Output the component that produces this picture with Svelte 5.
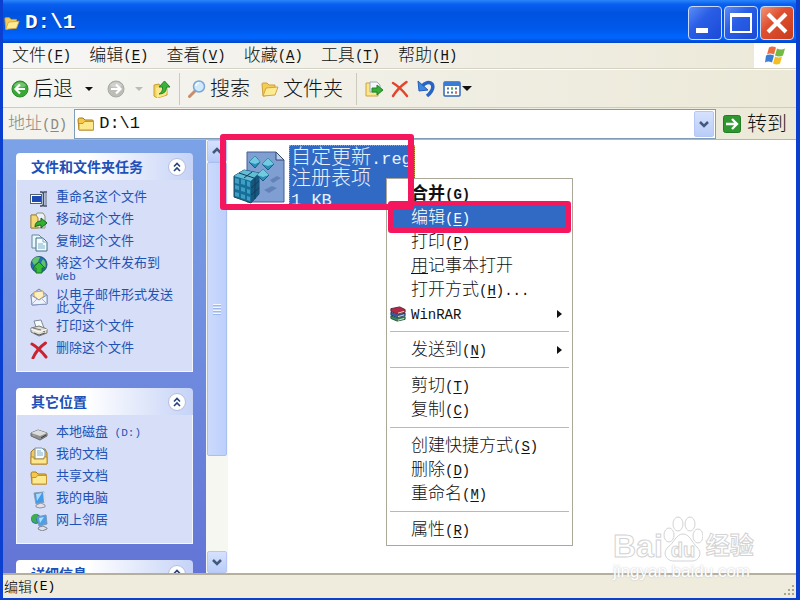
<script lang="ts">
  type Entry = { icon: string; text: string; latin?: string };
  type Command = { text: string; key?: string; tail?: string; icon?: string; submenu?: boolean; bold?: boolean; latin?: boolean; underlineFirst?: boolean };

  const menus = [
    { text: '文件', key: 'F' },
    { text: '编辑', key: 'E' },
    { text: '查看', key: 'V' },
    { text: '收藏', key: 'A' },
    { text: '工具', key: 'T' },
    { text: '帮助', key: 'H' },
  ];

  const panels: { title: string; items: Entry[] }[] = [
    {
      title: '文件和文件夹任务',
      items: [
        { icon: 'rename', text: '重命名这个文件' },
        { icon: 'move', text: '移动这个文件' },
        { icon: 'copy', text: '复制这个文件' },
        { icon: 'globe', text: '将这个文件发布到', latin: 'Web' },
        { icon: 'mail', text: '以电子邮件形式发送此文件' },
        { icon: 'print', text: '打印这个文件' },
        { icon: 'delete', text: '删除这个文件' },
      ],
    },
    {
      title: '其它位置',
      items: [
        { icon: 'disk', text: '本地磁盘', latin: ' (D:)' },
        { icon: 'docs', text: '我的文档' },
        { icon: 'folder', text: '共享文档' },
        { icon: 'computer', text: '我的电脑' },
        { icon: 'network', text: '网上邻居' },
      ],
    },
    { title: '详细信息', items: [] },
  ];

  const groups: Command[][] = [
    [
      { text: '合并', key: 'G', bold: true },
      { text: '编辑', key: 'E' },
      { text: '打印', key: 'P' },
      { text: '用记事本打开', underlineFirst: true },
      { text: '打开方式', key: 'H', tail: '...' },
      { text: 'WinRAR', icon: 'winrar', submenu: true, latin: true },
    ],
    [{ text: '发送到', key: 'N', submenu: true }],
    [
      { text: '剪切', key: 'T' },
      { text: '复制', key: 'C' },
    ],
    [
      { text: '创建快捷方式', key: 'S' },
      { text: '删除', key: 'D' },
      { text: '重命名', key: 'M' },
    ],
    [{ text: '属性', key: 'R' }],
  ];

  let active = $state('编辑');
  let address = $state('D:\\1');
  let closed: Record<string, boolean> = $state({});
</script>

{#snippet accel(key: string, tail = '')}<span class="latin">(<u>{key}</u>){tail}</span>{/snippet}

{#snippet icon(name: string)}
  <svg class="icon" viewBox="0 0 18 18" aria-hidden="true">
    {#if name === 'back' || name === 'forward'}
      <circle cx="9" cy="9" r="8" fill={name === 'back' ? '#39a936' : '#bdbdb8'} stroke={name === 'back' ? '#2c8a2b' : '#aaaaa5'} />
      <path d="M3 6a6.500 6 0 0 1 12 0q-6 3-12 0z" fill="#fff" opacity=".3" />
      <path d={name === 'back' ? 'M14 9H5M9 4.500 4.500 9 9 13.500' : 'M4 9h9M9 4.500 13.500 9 9 13.500'} fill="none" stroke="#fff" stroke-width="2.200" />
    {:else if name === 'up'}
      <path d="M1 5l5-1 1 2 7-1v10l-10 3-3-2z" fill="#f2d35e" stroke="#c89c30" />
      <path d="M3 8l10-3 2 1-2 9-9 3z" fill="#fbe88d" />
      <path d="M6 14q4-2 3.500-7H6l5.500-6L17 7h-3.500q0 7-7.500 7z" fill="#3bb23a" stroke="#23852a" />
    {:else if name === 'search'}
      <path d="M1.500 16.500 7 11" stroke="#c98d68" stroke-width="3" stroke-linecap="round" />
      <circle cx="11" cy="6.500" r="5.500" fill="#cfeafb" stroke="#7da5d5" stroke-width="1.500" />
      <path d="M8 6q0-3 3-3" fill="none" stroke="#fff" stroke-width="1.500" />
    {:else if name === 'folder-open'}
      <path d="M1 4q0-1 1-1h4l2 2h6v4L4 16H2z" fill="#f3cd55" stroke="#cf9f35" />
      <path d="M2 16 5 8l12-1-3 8z" fill="#fdeb94" stroke="#d3a63c" />
    {:else if name === 'folder'}
      <path d="M1 5q0-2 1.500-2H6l2 2h7q1.500 0 1.500 1.500V15H2z" fill="#f3c84b" stroke="#a8781d" />
      <path d="M2 15V8.500h4l1.500-2h9V15z" fill="#fde98d" stroke="#c59631" />
    {:else if name === 'moveto'}
      <path d="M1 3h5l1 2h6v11H1z" fill="#fbe68a" stroke="#cda343" />
      <path d="M5 2h7l3 3v7H5z" fill="#f5f8fb" stroke="#9fa9b4" />
      <path d="M7 8h5V5l6 5-6 5v-3H7z" fill="#35ad36" stroke="#1f8527" />
    {:else if name === 'cross'}
      <path d="M2 3q7 4 14 13M15.500 2Q7 8 2 16" fill="none" stroke="#e2442c" stroke-width="2.500" stroke-linecap="round" />
    {:else if name === 'undo'}
      <path d="M4 7q7-7 11-3 3 5-5 12" fill="none" stroke="#2864c4" stroke-width="3.500" />
      <path d="M1 1l1 10 9-1z" fill="#3d86df" stroke="#225fb8" />
    {:else if name === 'views'}
      <rect x="1" y="2" width="16" height="14" rx="1" fill="#fff" stroke="#3267b8" stroke-width="1.500" />
      <path d="M1 2h16v4H1z" fill="#3a7bd5" />
      <path d="M4 8.500h2m2 0h2m2 0h2M4 12.500h2m2 0h2m2 0h2" stroke="#4c78a8" stroke-width="2" />
      <path d="M8 8.500h2" stroke="#5bae55" stroke-width="2" /><path d="M12 12.500h2" stroke="#d47161" stroke-width="2" />
    {:else if name === 'rename'}
      <rect x=".5" y="4.500" width="11" height="9" fill="#fff" stroke="#55606f" />
      <rect x="2" y="6" width="9" height="6" fill="#1d49b4" />
      <path d="M10 2h2l1 1 1-1h3M13.500 3v12M10 16h2l1-1 1 1h3" fill="none" stroke="#414d63" stroke-width="1.500" />
      <path d="M16 3v12" stroke="#9aa5b5" stroke-width="2" />
    {:else if name === 'move'}
      <path d="M1 3h5l1-2h6l2 3v12H1z" fill="#edf0f4" stroke="#8d927a" />
      <path d="M1 3h5l2 3v10H1z" fill="#f5d875" stroke="#ac852f" />
      <path d="M5 15q0-6 6-6V6l6 5-6 5v-3q-4 0-6 2z" fill="#31b22f" stroke="#15641c" />
    {:else if name === 'copy'}
      <path d="M2 1h7l3 3v10H2z" fill="#e9f6fc" stroke="#64879b" />
      <path d="M6 4h7l4 4v9H6z" fill="#f3fcff" stroke="#426e84" />
      <path d="M13 4v4h4M8 10h5m-5 2h7m-7 2h7" fill="none" stroke="#7eafc9" />
    {:else if name === 'globe'}
      <circle cx="9" cy="8.500" r="8" fill="#256eb2" stroke="#245370" />
      <path d="M2 5q3-5 8-4l-2 5-4 3zm11-2q4 4 2 9l-4-5zM3 11l4 1 1 5z" fill="#61c46a" />
      <path d="M9 6l6 6h-3v5H6v-5H3z" fill="#38bd37" stroke="#167328" />
    {:else if name === 'mail'}
      <path d="M1 7l8-6 8 6v9l-15 1z" fill="#bfd1ef" stroke="#7184ab" />
      <path d="M4 8V4l9-1 1 5-5 4z" fill="#fff0bd" stroke="#cda653" />
      <path d="M1 7l8 5 8-5v9L2 17z" fill="#edf3ff" stroke="#8594bd" />
      <path d="M2 16l6-6m9 6-6-6" stroke="#a5b6d7" />
    {:else if name === 'print'}
      <path d="M4 2l7-1 3 8-7 2z" fill="#f8fafc" stroke="#7c8b9b" />
      <path d="M1 9l8-2 8 3v4l-8 3-8-4z" fill="#dedcd4" stroke="#777973" />
      <path d="M1 10l8 3 8-3" fill="none" stroke="#fff" /><path d="M4 14l5 2 6-2" stroke="#555" fill="none" />
      <path d="M3 9l8 2" stroke="#777" /><rect x="13" y="12" width="2" height="1" fill="#4ca651" />
    {:else if name === 'delete'}
      <path d="M2 3q7 4 14 13M15.500 2Q7 8 3 17" fill="none" stroke="#c92332" stroke-width="3" stroke-linecap="round" />
    {:else if name === 'disk'}
      <path d="M1 8l7-3 9 3v3l-7 4-9-4z" fill="#8e908f" stroke="#6b6d6d" />
      <path d="M1 8l7-3 9 3-7 3z" fill="#dcdddd" /><path d="M11 13l5-3" stroke="#353838" /><rect x="3" y="10" width="2" height="1" fill="#75c876" />
    {:else if name === 'docs'}
      <path d="M1 5l3-3h11l2 4v11H1z" fill="#f3ca58" stroke="#a47424" />
      <path d="M5 1h7l3 3v8H5z" fill="#f6fcff" stroke="#6f94ac" /><path d="M7 4h4M7 6h6M7 8h6" stroke="#7aaccc" />
      <path d="M1 10h3v2h10v-2h3v7H1z" fill="#fee78b" stroke="#bb8b2e" />
    {:else if name === 'computer'}
      <path d="M4 2l10-1 1 10-9 2z" fill="#459be8" stroke="#839bb7" />
      <path d="M6 3l6-1-5 8z" fill="#a9dcff" /><path d="M13 1l3 1v9l-2 1z" fill="#d7dde7" />
      <path d="M6 14l5-2 4 2v2l-5 1-4-1z" fill="#e1e2e7" stroke="#9294a5" />
    {:else if name === 'network'}
      <circle cx="6" cy="6" r="5" fill="#2a75bd" /><path d="M2 3q4-4 6-1L6 6l1 4q-5 0-6-5z" fill="#3fae4c" />
      <path d="M7 4l9-2 1 9-8 2z" fill="#4c9fe9" stroke="#7997b9" /><path d="M9 5l5-1-4 6z" fill="#b1e2ff" />
      <path d="M9 14l4-1 4 2v1l-5 2-4-2z" fill="#dedfe5" stroke="#7f8297" />
    {:else if name === 'winrar'}
      <path d="M1 3l10-2 6 3v3L8 9 1 6z" fill="#b32846" stroke="#54202c" />
      <path d="M1 7l7 3 9-2v3l-9 2-7-3z" fill="#3c62b3" stroke="#222e60" />
      <path d="M1 11l7 3 9-2v3l-9 2-7-3z" fill="#359160" stroke="#1c4b34" />
      <path d="M9 8l7-2M9 12l7-2M9 16l7-2" stroke="#f1e9be" />
    {:else if name === 'go'}
      <rect x=".5" y=".5" width="17" height="17" rx="2" fill="#2f972f" stroke="#237c28" />
      <path d="M3 9h11M9 4l5 5-5 5" fill="none" stroke="#fff" stroke-width="2.300" />
    {:else if name === 'chevron-down'}
      <path d="M5 7l4 4 4-4" fill="none" stroke="#43597f" stroke-width="2.500" />
    {:else if name === 'chevron-up'}
      <path d="M5 11l4-4 4 4" fill="none" stroke="#43597f" stroke-width="2.500" />
    {:else if name === 'collapse'}
      <circle cx="9" cy="9" r="8.500" fill="#fff" stroke="#b3bedb" />
      <path d="M6 8.500l3-3 3 3M6 13l3-3 3 3" fill="none" stroke="#27437d" stroke-width="1.600" />
    {/if}
  </svg>
{/snippet}

<div class="window">
  <header class="titlebar">
    {@render icon('folder-open')}
    <h1>D:\1</h1>
    <div class="controls">
      <button aria-label="最小化"><svg viewBox="0 0 32 32"><path d="M7 23.500h12" stroke="#fff" stroke-width="5" /></svg></button>
      <button aria-label="最大化"><svg viewBox="0 0 32 32"><path d="M6 7h20v18H6z" fill="none" stroke="#fff" stroke-width="2" /><path d="M5 8h22" stroke="#fff" stroke-width="4" /></svg></button>
      <button class="close" aria-label="关闭"><svg viewBox="0 0 32 32"><path d="M7 7l18 18M25 7L7 25" stroke="#fff" stroke-width="4" /></svg></button>
    </div>
  </header>

  <nav class="menubar">
    {#each menus as menu}
      <button>{menu.text}{@render accel(menu.key)}</button>
    {/each}
    <div class="flag">
      <svg viewBox="0 0 22 20" aria-hidden="true">
        <path d="M5 2q3-2 7 0l-2 7Q6 7 3 9z" fill="#e96d3e" />
        <path d="M13 3q4 2 8 0l-2 7q-4 2-8 0z" fill="#73b943" />
        <path d="M2 10q4-2 8 0l-2 7q-4-2-7 0z" fill="#3b7ed1" />
        <path d="M11 11q4 2 7 0l-2 7q-3 2-7 0z" fill="#f4bd25" />
      </svg>
    </div>
  </nav>

  <div class="toolbar">
    <button>{@render icon('back')}后退</button>
    <button class="drop" aria-label="后退列表"><i class="caret"></i></button>
    <button class="forward" disabled aria-label="前进">{@render icon('forward')}<i class="caret"></i></button>
    <button aria-label="向上">{@render icon('up')}</button>
    <span class="divider"></span>
    <button>{@render icon('search')}搜索</button>
    <button class="folders">{@render icon('folder-open')}文件夹</button>
    <span class="divider"></span>
    <div class="tools">
      <button aria-label="移至">{@render icon('moveto')}</button>
      <button aria-label="删除">{@render icon('cross')}</button>
      <button aria-label="撤消">{@render icon('undo')}</button>
      <button class="views" aria-label="查看">{@render icon('views')}<i class="caret"></i></button>
    </div>
  </div>

  <div class="addressbar">
    <label for="address">地址{@render accel('D')}</label>
    <div class="combo">
      {@render icon('folder')}
      <input id="address" type="text" bind:value={address} />
      <button class="xp-button" aria-label="地址列表">{@render icon('chevron-down')}</button>
    </div>
    <button class="go">{@render icon('go')}转到</button>
  </div>

  <main>
    <aside>
      {#each panels as panel}
        <section class="panel">
          <h2>
            {panel.title}
            <button aria-label="折叠" onclick={() => (closed[panel.title] = !closed[panel.title])}>{@render icon('collapse')}</button>
          </h2>
          {#if !closed[panel.title]}
            <ul>
              {#each panel.items as item}
                <li>{@render icon(item.icon)}<a href="#{item.icon}">{item.text}{#if item.latin}<span class="latin">{item.latin}</span>{/if}</a></li>
              {/each}
            </ul>
          {/if}
        </section>
      {/each}
    </aside>

    <div class="scrollbar">
      <button class="xp-button" aria-label="向上滚动">{@render icon('chevron-up')}</button>
      <div class="thumb"><i></i><i></i><i></i><i></i></div>
      <button class="xp-button" aria-label="向下滚动">{@render icon('chevron-down')}</button>
    </div>

    <div class="view">
      <div class="file">
        <svg viewBox="0 0 54 54" aria-hidden="true">
          <path d="M15 2h29l8 8v42H15z" fill="#7f9fd2" stroke="#455f94" />
          <path d="M44 2v8h8z" fill="#b9d0ef" stroke="#35476b" />
          <path d="M32 40l8-4 5 2-8 5zM38 30l7-4 4 2-8 5z" fill="#6482ba" />
          <path d="M2 26l10-6 15 3v21l-8 9-17-6z" fill="#176e98" stroke="#164964" />
          <path d="M2 26l10-6 15 3-8 8z" fill="#63bdd7" />
          <path d="M19 31l8-8v21l-8 9z" fill="#17567e" />
          <path d="M3 28l4 1v5l-4-1zm6 1 4 1v5l-4-1zm6 2 3 1v5l-3-1zM3 35l4 1v4l-4-1zm6 2 4 1v4l-4-1zm6 2 3 1v4l-3-1zM3 42l4 1v4l-4-1zm6 2 4 1v4l-4-1zm6 2 3 1v4l-3-1z" fill="#3f9fc2" />
          <path d="M7 23l15 5M12 28l8-6M23 28v21M19 38l8-7M19 45l8-7" stroke="#123f5a" fill="none" />
          <path d="M23 6l5 6-5 6-6-6zM36 8l6 6-6 6-6-6zM31 19l6 6-6 6-6-6z" fill="#2c8fb9" stroke="#185b7f" />
          <path d="M23 6l5 6-5 2-6-2zM36 8l6 6-6 2-6-2zM31 19l6 6-6 2-6-2z" fill="#70cbe0" />
        </svg>
        <p>自定更新<span class="latin">.reg</span><br />注册表项<br /><span class="latin">1 KB</span></p>
      </div>
    </div>
  </main>

  <footer>
    编辑<span class="latin">(E)</span>
    <svg viewBox="0 0 14 14" aria-hidden="true"><path d="M10 2h2M6 6h2m2 0h2M2 10h2m2 0h2m2 0h2" stroke="#aaa58f" stroke-width="2" /></svg>
  </footer>

  <div class="context" role="menu">
    {#each groups as group, i}
      {#if i > 0}<hr />{/if}
      {#each group as item}
        <button role="menuitem" class:active={active === item.text} class:bold={item.bold} onclick={() => (active = item.text)}>
          <span class="slot">{#if item.icon}{@render icon(item.icon)}{/if}</span>
          <span>
            {#if item.underlineFirst}<u>{item.text[0]}</u>{item.text.slice(1)}{:else}<span class:latin={item.latin}>{item.text}</span>{/if}{#if item.key}{@render accel(item.key, item.tail)}{/if}
          </span>
          {#if item.submenu}<i class="arrow"></i>{/if}
        </button>
      {/each}
    {/each}
  </div>

  <div class="mark mark-file"></div>
  <div class="mark mark-edit"></div>

  <div class="watermark">
    <div class="logo">
      <span>Bai</span>
      <svg viewBox="0 0 40 48" aria-hidden="true">
        <g fill="#fff" stroke="#d3d3d3">
          <ellipse cx="6" cy="20" rx="5" ry="7" /><ellipse cx="15" cy="9" rx="5" ry="7" /><ellipse cx="27" cy="9" rx="5" ry="7" /><ellipse cx="35" cy="21" rx="5" ry="7" />
          <path d="M20 19c7 0 9 9 14 13 6 6 2 14-5 14H11c-8 0-12-8-6-14 6-4 8-13 15-13z" />
        </g>
        <text x="20" y="42" text-anchor="middle">du</text>
      </svg>
      <span class="cn">经验</span>
    </div>
    <div class="site">jingyan.baidu.com</div>
  </div>
</div>

<style>
  :global(body) { margin: 0; }
  * { box-sizing: border-box; }
  .window {
    position: relative;
    display: flex;
    flex-direction: column;
    height: 100vh;
    overflow: hidden;
    border: solid #0b3fd0;
    border-width: 0 4px 2px 3px;
    background: #efecdd;
    color: #111;
    font: 17px/20px "Liberation Sans", "Noto Sans CJK SC", sans-serif;
    font-weight: 300;
  }
  button {
    display: flex;
    align-items: center;
    padding: 0;
    border: 0;
    background: none;
    color: inherit;
    font: inherit;
    white-space: nowrap;
  }
  .icon { display: block; width: 18px; height: 18px; flex: none; }
  .latin { font-family: "Liberation Mono", monospace; font-size: 14px; line-height: 1; white-space: pre; }
  u { text-underline-offset: 2px; }

  .titlebar {
    display: flex;
    align-items: center;
    flex: none;
    height: 43px;
    margin: 0 -4px 0 -3px;
    padding: 3px 6px 0 4px;
    background: linear-gradient(#2a86fb, #0a5ff0 10%, #0053e0 30%, #0058ea 65%, #0066ff 88%, #0045c8);
    color: #fff;
  }
  h1 { flex: 1; margin: 0 0 0 5px; font: bold 21px/26px "Liberation Mono", monospace; text-shadow: 1px 1px #0a2f8a; }
  .titlebar .icon { width: 16px; height: 16px; }
  .controls { display: flex; gap: 2px; }
  .controls button {
    width: 34px;
    height: 34px;
    border: 1px solid #c9dcff;
    border-radius: 4px;
    background: linear-gradient(135deg, #5d8df5, #2a5ee6 40%, #1c4ad6);
  }
  .controls .close { background: linear-gradient(135deg, #f09678, #df5030 40%, #c83c1a); }
  .controls svg { width: 32px; height: 32px; }

  .menubar {
    display: flex;
    align-items: center;
    flex: none;
    gap: 18px;
    height: 26px;
    padding-left: 9px;
    border-bottom: 1px solid #d5d2c4;
    background: linear-gradient(90deg, #f6f6f5, #ece9d8);
  }
  .flag { display: flex; justify-content: center; align-self: stretch; width: 42px; margin-left: auto; background: #fff; }
  .flag svg { width: 22px; }

  .toolbar {
    display: flex;
    align-items: center;
    flex: none;
    height: 38px;
    padding-left: 8px;
    border-top: 1px solid #fff;
    background: linear-gradient(90deg, #f5f5f2, #ece9d8);
    font-size: 20px;
  }
  .toolbar button { gap: 4px; }
  .caret { border: 4px solid transparent; border-top-color: currentColor; border-bottom: 0; }
  .toolbar .drop { margin: 0 14px 0 12px; }
  .toolbar .forward { gap: 10px; margin-right: 10px; color: #bbb; }
  .divider { width: 1px; height: 32px; margin: 0 8px; background: #cdcabd; }
  .toolbar .folders { margin: 0 5px 0 11px; }
  .tools { display: flex; align-items: center; gap: 8px; }
  .toolbar .views { gap: 1px; }
  .views .caret { border-width: 5px 5px 0; }

  .addressbar {
    display: flex;
    align-items: center;
    flex: none;
    height: 32px;
    padding: 0 9px 0 5px;
    border-top: 1px solid #cfccbd;
    background: linear-gradient(90deg, #f4f3ee, #ece9d8);
  }
  label { color: #8a887e; }
  .combo {
    display: flex;
    align-items: center;
    flex: 1;
    height: 30px;
    margin: 0 7px;
    padding: 1px 1px 1px 2px;
    border: 1px solid #7f9db9;
    background: #fff;
  }
  input { flex: 1; min-width: 0; padding: 0 4px; border: 0; outline: 0; background: none; color: inherit; font: 17px/24px "Liberation Mono", monospace; }
  .xp-button {
    justify-content: center;
    flex: none;
    width: 20px;
    height: 26px;
    border: 1px solid #b4c7f5;
    border-radius: 2px;
    background: linear-gradient(#d6e1fd, #b9cdf8);
  }
  .go { gap: 6px; font-size: 20px; }

  main { display: flex; flex: 1; min-height: 0; background: #fff; border-top: 1px solid #a9b7cc; }
  aside {
    flex: none;
    width: 203px;
    padding: 13px 13px 0;
    overflow: hidden;
    background: linear-gradient(#7ba2e7, #6375d6);
  }
  .panel { margin-bottom: 16px; color: #1f52b5; }
  h2 {
    display: flex;
    align-items: center;
    justify-content: space-between;
    height: 27px;
    margin: 0;
    padding: 0 7px 0 15px;
    border-radius: 4px 4px 0 0;
    background: linear-gradient(90deg, #fff 40%, #c6d3f7);
    color: #1d50b8;
    font-size: 14px;
    font-weight: bold;
  }
  ul { margin: 0; padding: 8px 14px 10px 13px; border: 1px solid #f5f7ff; border-top: 0; background: #d6dff7; list-style: none; }
  li { display: flex; gap: 8px; min-height: 22px; padding: 2px 0 3px; font-size: 13px; font-weight: 400; line-height: 13px; }
  li a { width: 118px; color: inherit; text-decoration: none; }
  li .latin { font-size: 11px; }
  li .icon { margin-bottom: -3px; }

  .scrollbar { display: flex; flex-direction: column; flex: none; width: 22px; padding: 0 1px; background: #f7f7f2; }
  .scrollbar .xp-button { height: 22px; }
  .thumb {
    display: flex;
    flex-direction: column;
    align-items: center;
    justify-content: center;
    gap: 2px;
    height: 68%;
    margin-bottom: auto;
    border: 1px solid #a9bff0;
    border-radius: 2px;
    background: linear-gradient(90deg, #cbdafd, #bdd0fb);
  }
  .thumb i { width: 8px; height: 1px; background: #f2f6ff; box-shadow: 0 1px #9eb6ea; }

  .view { flex: 1; min-width: 0; padding: 5px 4px; }
  .file { display: flex; align-items: center; gap: 3px; }
  .file svg { width: 54px; height: 54px; }
  .file p {
    width: 126px;
    height: 64px;
    margin: 0;
    padding: 1px;
    overflow: hidden;
    border: 1px dotted #d0a050;
    background: #316ac5;
    color: #e9f0fb;
    font-size: 20px;
    line-height: 20px;
    white-space: nowrap;
  }
  .file .latin { font-size: 17px; }

  footer {
    display: flex;
    align-items: center;
    flex: none;
    height: 25px;
    padding: 0 0 0 1px;
    border-top: 2px solid #b5b09d;
    font-size: 14px;
    color: #000;
  }
  footer .latin { font-size: 13px; }
  footer svg { align-self: flex-end; width: 14px; height: 14px; margin-left: auto; }

  .context {
    position: absolute;
    top: 178px;
    left: 383px;
    width: 187px;
    padding: 3px 2px;
    border: 1px solid #aca899;
    background: #fff;
  }
  .context button { width: 100%; height: 24px; padding-right: 8px; }
  .context .active { background: #316ac5; color: #fff; }
  .context .bold { font-weight: bold; }
  .slot { flex: none; width: 22px; padding-left: 1px; }
  .slot .icon { width: 16px; height: 16px; }
  .arrow { margin-left: auto; border: 4px solid transparent; border-left: 5px solid #111; border-right: 0; }
  hr { height: 1px; margin: 5px 1px 6px; border: 0; background: #bdbaa9; }

  .mark { position: absolute; border: 5px solid #f5175e; border-radius: 3px; pointer-events: none; }
  .mark-file { top: 134px; left: 217px; width: 194px; height: 76px; border-width: 6px; }
  .mark-edit { top: 201px; left: 385px; width: 183px; height: 32px; }

  .watermark {
    position: absolute;
    right: 39px;
    bottom: 17px;
    width: 144px;
    color: #fff;
    pointer-events: none;
  }
  .logo { display: flex; align-items: flex-end; font: bold 32px/34px "Liberation Sans", "Noto Sans CJK SC", sans-serif; -webkit-text-stroke: 1px #d3d3d3; }
  .logo svg { width: 40px; height: 48px; }
  .logo text { fill: #fff; stroke: #d3d3d3; font-size: 20px; }
  .logo .cn { margin-left: 3px; font-size: 24px; }
  .site { font: 17px/18px "Liberation Sans", sans-serif; text-shadow: 0 0 2px #bbb; }
</style>
